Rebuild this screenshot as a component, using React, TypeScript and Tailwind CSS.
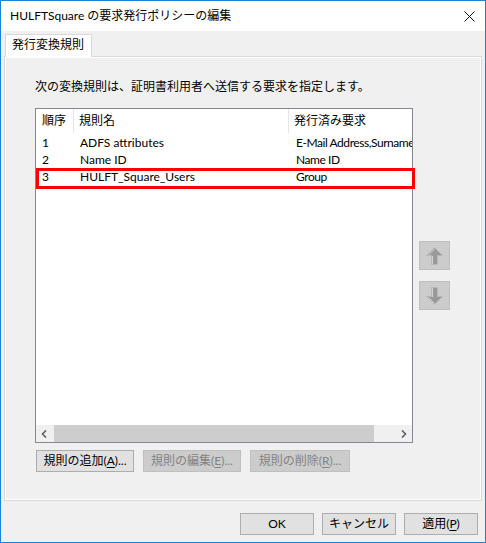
import React from "react";

const font = { fontFamily: 'Lato, "Noto Sans CJK JP", sans-serif' };

const rows = [
  { no: "1", name: "ADFS attributes", claim: "E-Mail Address,Surname" },
  { no: "2", name: "Name ID", claim: "Name ID" },
  { no: "3", name: "HULFT_Square_Users", claim: "Group" },
];

const Mnemonic = ({ label, k, dots }: { label: string; k: string; dots?: boolean }) => (
  <span>
    {label}(<span className="underline underline-offset-2">{k}</span>){dots ? "..." : ""}
  </span>
);

const ArrowUp = () => (
  <svg width="17" height="18" viewBox="0 0 17 18">
    <path d="M8.5 0.5 L16.5 8.5 L11.5 8.5 L11.5 17.5 L5.5 17.5 L5.5 8.5 L0.5 8.5 Z" fill="#999999" stroke="#b8b8b8" strokeWidth="1" />
    <path d="M8.5 2 L2.5 8 M6.5 9 L6.5 17" fill="none" stroke="#d4d4d4" strokeWidth="1" />
  </svg>
);

const ArrowDown = () => (
  <svg width="17" height="18" viewBox="0 0 17 18">
    <path d="M8.5 17.5 L16.5 9.5 L11.5 9.5 L11.5 0.5 L5.5 0.5 L5.5 9.5 L0.5 9.5 Z" fill="#999999" stroke="#b8b8b8" strokeWidth="1" />
    <path d="M6.5 1 L6.5 10 M2.5 10.5 L8.5 16.5" fill="none" stroke="#d4d4d4" strokeWidth="1" />
  </svg>
);

export default function App() {
  return (
    <div
      style={font}
      className="w-[486px] h-[543px] flex flex-col border border-[#1883d7] bg-[#f0f0f0] text-[12px] leading-[16px] text-black overflow-hidden"
    >
      {/* title bar */}
      <div className="h-[30px] bg-white flex items-center justify-between pl-[9px] pr-[10px]">
        <span>HULFTSquare の要求発行ポリシーの編集</span>
        <svg width="11" height="11" viewBox="0 0 11 11">
          <path d="M0.5 0.5 L10.5 10.5 M10.5 0.5 L0.5 10.5" stroke="#111" strokeWidth="1" />
        </svg>
      </div>

      <div className="flex-1 flex flex-col px-[3px]">
        {/* tab */}
        <div className="mt-[3px] ml-[1px] relative z-10 -mb-px">
          <div className="w-[87px] h-[23px] bg-white border border-b-0 border-[#d9d9d9] pl-[6px] pb-[3px] flex items-center">
            発行変換規則
          </div>
        </div>

        {/* tab page */}
        <div className="h-[445px] border border-[#d9d9d9] shadow-[inset_0_0_0_1px_#ffffff] pl-[30px] pt-[22px] flex flex-col">
          <p>次の変換規則は、証明書利用者へ送信する要求を指定します。</p>

          <div className="mt-[13px] flex">
            {/* list view */}
            <div className="relative w-[378px] h-[335px] shrink-0 border border-[#828790] bg-white flex flex-col">
              <div className="h-[24px] flex items-center whitespace-nowrap">
                <div className="w-[38px] shrink-0 pl-[6px] h-full flex items-center border-r border-[#e5e5e5]">順序</div>
                <div className="w-[215px] shrink-0 pl-[5px] h-full flex items-center border-r border-[#e5e5e5]">規則名</div>
                <div className="pl-[5px]">発行済み要求</div>
              </div>
              <div className="mt-[1px] flex-1 overflow-hidden">
                {rows.map((r) => (
                  <div key={r.no} className="h-[17px] flex items-center whitespace-nowrap">
                    <div className="w-[38px] shrink-0 pl-[6px]">{r.no}</div>
                    <div className="w-[216px] shrink-0 pl-[6px]">{r.name}</div>
                    <div className="shrink-0 pl-[6px] tracking-[-0.45px]">{r.claim}</div>
                  </div>
                ))}
              </div>
              {/* horizontal scrollbar */}
              <div className="h-[17px] flex bg-[#f0f0f0]">
                <div className="w-[17px] flex items-center justify-center">
                  <svg width="7" height="8" viewBox="0 0 7 8">
                    <path d="M5 0.5 L1.5 4 L5 7.5" fill="none" stroke="#606060" strokeWidth="1.6" />
                  </svg>
                </div>
                <div className="flex-1 flex items-stretch pr-[21px] pl-[1px]">
                  <div className="flex-1 bg-[#cdcdcd]" />
                </div>
                <div className="w-[17px] flex items-center justify-center">
                  <svg width="7" height="8" viewBox="0 0 7 8">
                    <path d="M2 0.5 L5.5 4 L2 7.5" fill="none" stroke="#606060" strokeWidth="1.6" />
                  </svg>
                </div>
              </div>
              {/* highlight annotation */}
              <div className="absolute left-0 top-[59px] w-[379px] h-[21px] border-[3px] border-[#ff0000]" />
            </div>

            {/* move buttons */}
            <div className="ml-[6px] pt-[133px] flex flex-col gap-[11px]">
              <div className="w-[31px] h-[29px] bg-[#cccccc] border border-[#bfbfbf] flex items-center justify-center">
                <ArrowUp />
              </div>
              <div className="w-[31px] h-[29px] bg-[#cccccc] border border-[#bfbfbf] flex items-center justify-center">
                <ArrowDown />
              </div>
            </div>
          </div>

          <div className="mt-[7px] ml-[1px] flex gap-[9px]">
            <button className="w-[98px] h-[22px] bg-[#e1e1e1] border border-[#adadad] flex items-center justify-center">
              <Mnemonic label="規則の追加" k="A" dots />
            </button>
            <button className="w-[98px] h-[22px] bg-[#cccccc] border border-[#bfbfbf] text-[#838383] flex items-center justify-center">
              <Mnemonic label="規則の編集" k="E" dots />
            </button>
            <button className="w-[100px] h-[22px] bg-[#cccccc] border border-[#bfbfbf] text-[#838383] flex items-center justify-center">
              <Mnemonic label="規則の削除" k="R" dots />
            </button>
          </div>
        </div>

        {/* dialog buttons */}
        <div className="mt-[12px] flex justify-end gap-[8px] pr-[4px]">
          <button className="w-[74px] h-[22px] bg-[#e1e1e1] border border-[#adadad] flex items-center justify-center">OK</button>
          <button className="w-[74px] h-[22px] bg-[#e1e1e1] border border-[#adadad] flex items-center justify-center">キャンセル</button>
          <button className="w-[74px] h-[22px] bg-[#e1e1e1] border border-[#adadad] flex items-center justify-center">
            <Mnemonic label="適用" k="P" />
          </button>
        </div>
      </div>
    </div>
  );
}
